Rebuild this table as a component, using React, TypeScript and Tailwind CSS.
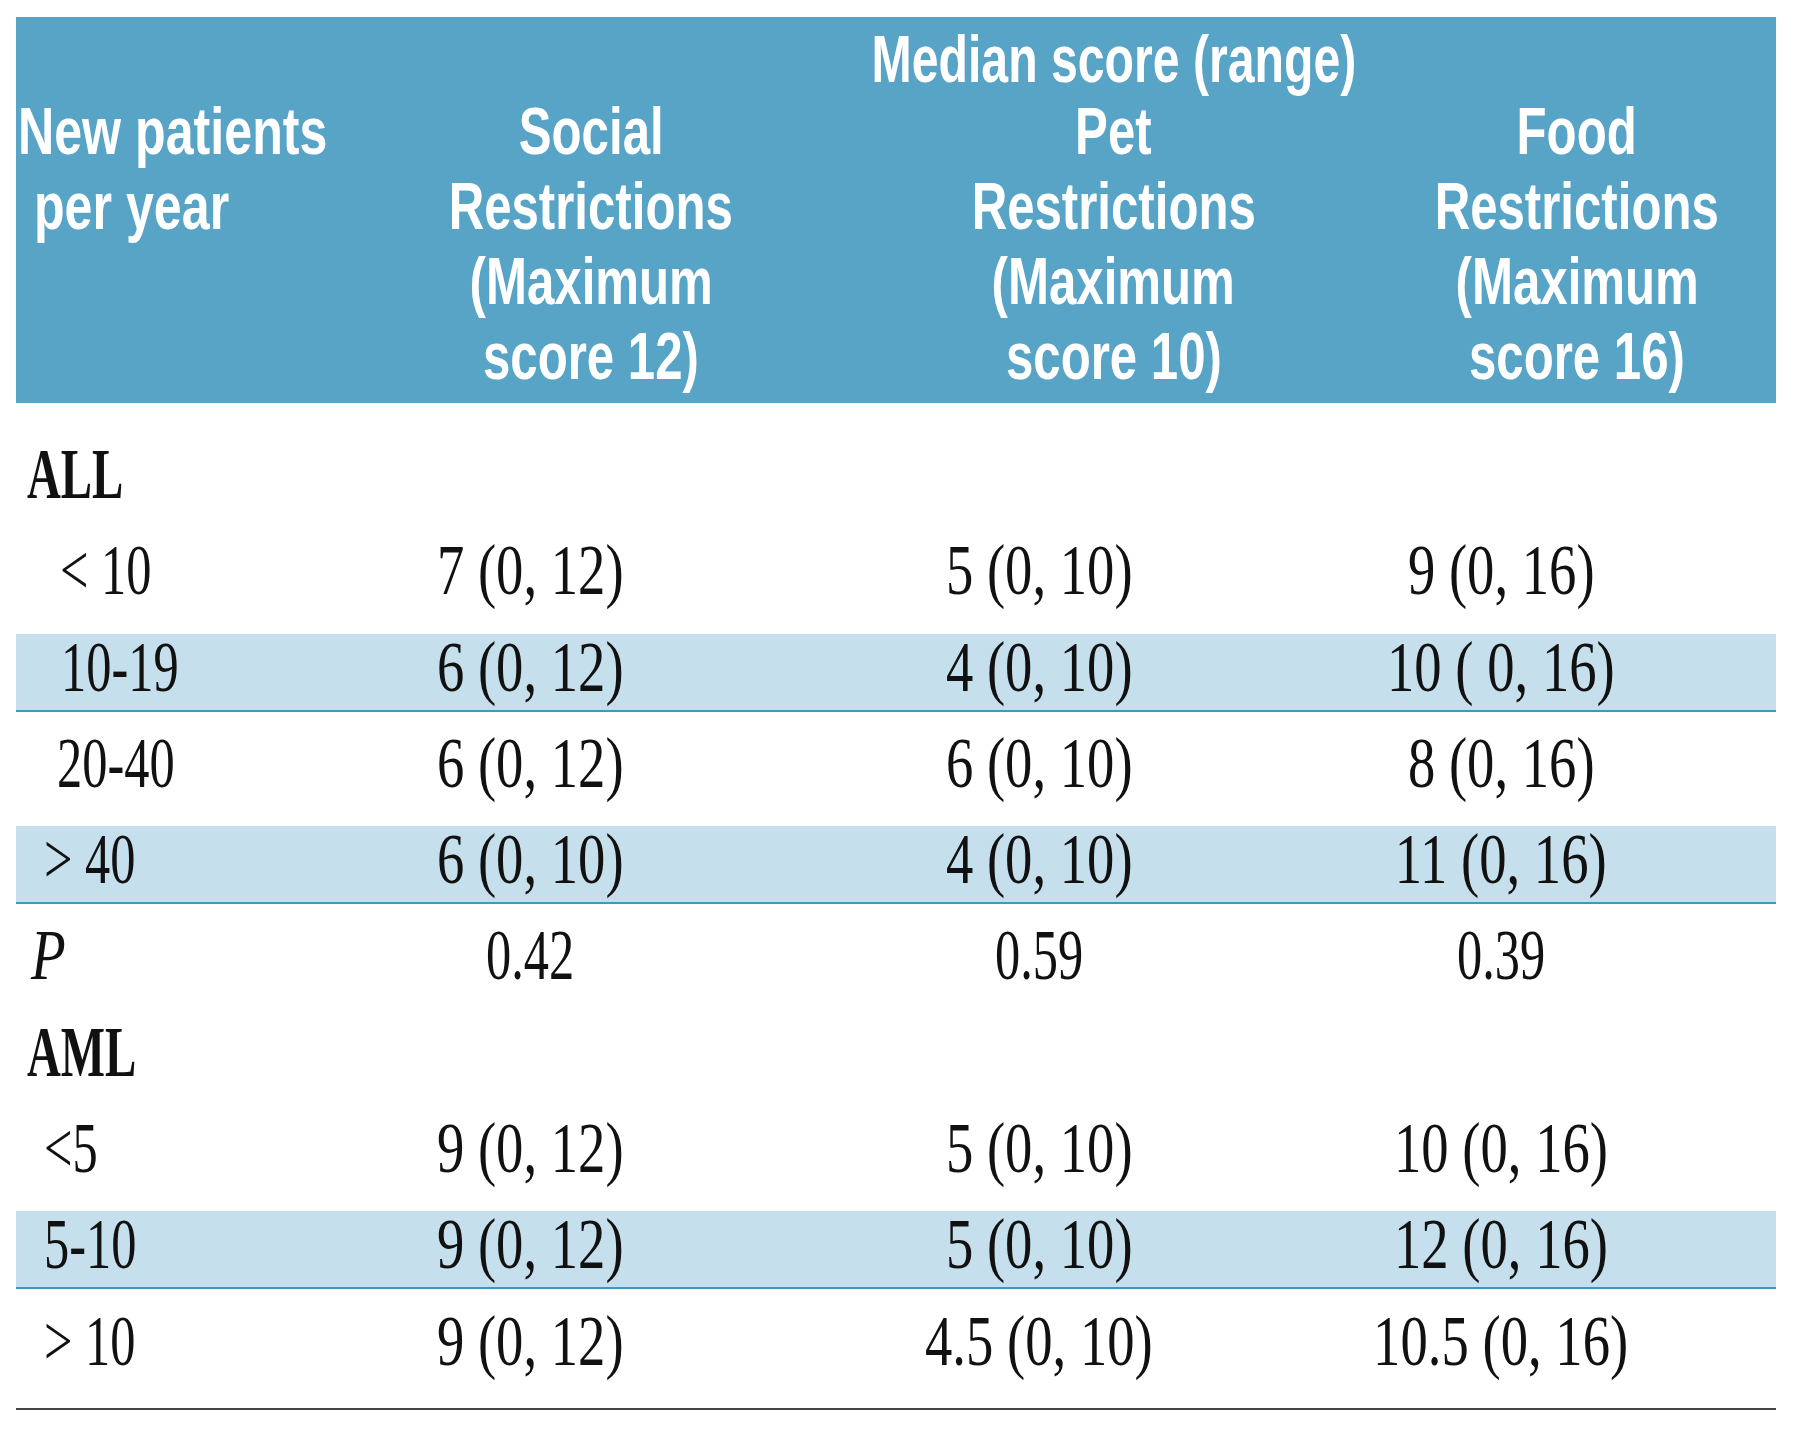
type Row = {
  label: string;
  kind: "group" | "item" | "p";
  indent?: string;
  band?: boolean;
  social?: string;
  pet?: string;
  food?: string;
};

const rows: Row[] = [
  { label: "ALL", kind: "group" },
  { label: "< 10", kind: "item", indent: "pl-[44px]", social: "7 (0, 12)", pet: "5 (0, 10)", food: "9 (0, 16)" },
  { label: "10-19", kind: "item", indent: "pl-[45px]", band: true, social: "6 (0, 12)", pet: "4 (0, 10)", food: "10 ( 0, 16)" },
  { label: "20-40", kind: "item", indent: "pl-[41px]", social: "6 (0, 12)", pet: "6 (0, 10)", food: "8 (0, 16)" },
  { label: "> 40", kind: "item", indent: "pl-[28px]", band: true, social: "6 (0, 10)", pet: "4 (0, 10)", food: "11 (0, 16)" },
  { label: "P", kind: "p", social: "0.42", pet: "0.59", food: "0.39" },
  { label: "AML", kind: "group" },
  { label: "<5", kind: "item", indent: "pl-[28px]", social: "9 (0, 12)", pet: "5 (0, 10)", food: "10 (0, 16)" },
  { label: "5-10", kind: "item", indent: "pl-[28px]", band: true, social: "9 (0, 12)", pet: "5 (0, 10)", food: "12 (0, 16)" },
  { label: "> 10", kind: "item", indent: "pl-[28px]", social: "9 (0, 12)", pet: "4.5 (0, 10)", food: "10.5 (0, 16)" },
];

function Head({ lines }: { lines: string[] }) {
  return (
    <div className="flex flex-col items-center">
      {lines.map((l) => (
        <span key={l} className="inline-block origin-center scale-x-[0.745] whitespace-nowrap">
          {l}
        </span>
      ))}
    </div>
  );
}

function Value({ text, p }: { text?: string; p?: boolean }) {
  return (
    <div className="flex justify-center">
      {text && (
        <span className={`inline-block origin-center whitespace-nowrap ${p ? "scale-x-[0.71]" : "scale-x-[0.77]"}`}>
          {text}
        </span>
      )}
    </div>
  );
}

export default function App() {
  return (
    <div className="min-h-[1433px] w-[1800px] bg-white pl-4 pt-[17px]">
      <div className="w-[1760px]">
        {/* header band */}
        <div className="grid h-[386px] grid-cols-[330px_490px_555px_372px_1fr] grid-rows-[72px_auto] bg-[#58a4c6] pt-[5px] font-['Liberation_Sans',sans-serif] text-[66px] font-bold leading-[75px] text-white">
          <div className="col-start-3 row-start-1 flex justify-center">
            <span className="inline-block origin-center scale-x-[0.73] whitespace-nowrap">Median score (range)</span>
          </div>
          <div className="col-start-1 row-start-2 flex flex-col items-start pl-[2px]">
            <span className="inline-block origin-left scale-x-[0.76] whitespace-nowrap">New patients</span>
            <span className="inline-block origin-left scale-x-[0.76] whitespace-nowrap pl-[21px]">per year</span>
          </div>
          <div className="col-start-2 row-start-2">
            <Head lines={["Social", "Restrictions", "(Maximum", "score 12)"]} />
          </div>
          <div className="col-start-3 row-start-2">
            <Head lines={["Pet", "Restrictions", "(Maximum", "score 10)"]} />
          </div>
          <div className="col-start-4 row-start-2">
            <Head lines={["Food", "Restrictions", "(Maximum", "score 16)"]} />
          </div>
        </div>

        {/* body */}
        <div className="mt-[38px] flex flex-col gap-y-[18.3px] font-['Liberation_Serif',serif] text-[71px] leading-[66px] text-[#111111]">
          {rows.map((r) => (
            <div
              key={r.label}
              className={`grid h-[78px] grid-cols-[250px_528px_490px_434px_1fr] items-start ${
                r.band ? "border-b-2 border-[#3f98c2] bg-[#c6dfec]" : ""
              }`}
            >
              {r.kind === "group" && (
                <div className="pl-[11px] font-bold">
                  <span className="inline-block origin-left scale-x-[0.66]">{r.label}</span>
                </div>
              )}
              {r.kind === "p" && (
                <div className="pl-[15px] italic">
                  <span className="inline-block origin-left scale-x-[0.8]">{r.label}</span>
                </div>
              )}
              {r.kind === "item" && (
                <div className={r.indent}>
                  <span className="inline-block origin-left scale-x-[0.71] whitespace-nowrap">{r.label}</span>
                </div>
              )}
              <Value text={r.social} p={r.kind === "p"} />
              <Value text={r.pet} p={r.kind === "p"} />
              <Value text={r.food} p={r.kind === "p"} />
            </div>
          ))}
        </div>
        <div className="mt-[22px] h-[2px] bg-[#444444]" />
      </div>
    </div>
  );
}
